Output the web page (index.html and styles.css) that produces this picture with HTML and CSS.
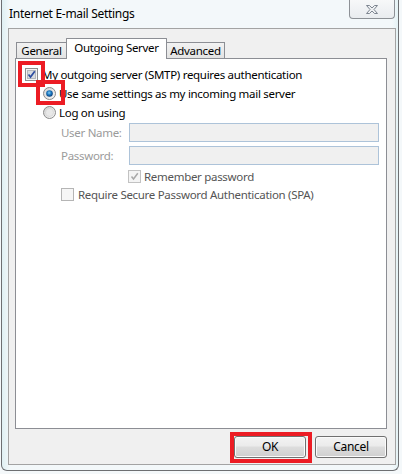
FILE: index.html
```html
<!DOCTYPE html>
<html>
<head>
<meta charset="utf-8">
<link rel="stylesheet" href="styles.css">
</head>
<body>
<div class="window">
  <div class="titlebar">
    <span class="title">Internet E-mail Settings</span>
    <div class="close">
      <svg width="14" height="11" viewBox="0 0 14 11">
        <path d="M1.5 1.5 H4.5 L7 4 L9.5 1.5 H12.5 L9 5.5 L12.5 9.5 H9.5 L7 7 L4.5 9.5 H1.5 L5 5.5 Z" fill="#eef0f2" stroke="#7d8590" stroke-width="1" stroke-linejoin="round"/>
      </svg>
    </div>
  </div>
  <div class="client">
    <div class="tabs">
      <div class="tab first">General</div>
      <div class="tab active">Outgoing Server</div>
      <div class="tab last">Advanced</div>
    </div>
    <div class="panel">
      <div class="row r1">
        <svg class="box" width="13" height="13" viewBox="0 0 13 13">
          <rect x="0.5" y="0.5" width="12" height="12" fill="#f4f4f4" stroke="#8e8f8f"/>
          <rect x="2.5" y="2.5" width="8" height="8" fill="#d9dcdf" stroke="#b4b8bc"/>
          <path d="M3.5 6.5 L5.5 9 L9.8 3.2" fill="none" stroke="#2d4da0" stroke-width="1.7"/>
        </svg>
        <span class="label">My outgoing server (SMTP) requires authentication</span>
      </div>
      <div class="row r2">
        <svg class="radio" width="13" height="13" viewBox="0 0 13 13">
          <defs>
            <radialGradient id="dot" cx="0.45" cy="0.4" r="0.6">
              <stop offset="0" stop-color="#8ad0f5"/>
              <stop offset="0.5" stop-color="#1b79c2"/>
              <stop offset="1" stop-color="#0b3e78"/>
            </radialGradient>
            <linearGradient id="rb" x1="0" y1="0" x2="1" y2="1">
              <stop offset="0" stop-color="#d4d4d4"/>
              <stop offset="1" stop-color="#f7f7f7"/>
            </linearGradient>
          </defs>
          <circle cx="6.5" cy="6.5" r="6" fill="url(#rb)" stroke="#8b8b8b"/>
          <circle cx="6.5" cy="6.5" r="3.3" fill="url(#dot)"/>
        </svg>
        <span class="label">Use same settings as my incoming mail server</span>
      </div>
      <div class="row r3">
        <svg class="radio" width="13" height="13" viewBox="0 0 13 13">
          <defs>
            <linearGradient id="rb2" x1="0" y1="0" x2="1" y2="1">
              <stop offset="0" stop-color="#cfcfcf"/>
              <stop offset="1" stop-color="#f9f9f9"/>
            </linearGradient>
          </defs>
          <circle cx="6.5" cy="6.5" r="6" fill="url(#rb2)" stroke="#8b8b8b"/>
          <circle cx="6.5" cy="6.5" r="4" fill="#e8e8e8" stroke="#d0d0d0" stroke-width="0.6"/>
        </svg>
        <span class="label">Log on using</span>
      </div>
      <div class="row field f1">
        <span class="flabel">User Name:</span>
        <div class="input"></div>
      </div>
      <div class="row field f2">
        <span class="flabel">Password:</span>
        <div class="input"></div>
      </div>
      <div class="row r6">
        <svg class="box" width="13" height="13" viewBox="0 0 13 13">
          <rect x="0.5" y="0.5" width="12" height="12" fill="#f4f4f4" stroke="#c2c2c2"/>
          <path d="M3.5 6.5 L5.5 9 L9.8 3.2" fill="none" stroke="#a8a8a8" stroke-width="1.5"/>
        </svg>
        <span class="label dim">Remember password</span>
      </div>
      <div class="row r7">
        <svg class="box" width="13" height="13" viewBox="0 0 13 13">
          <rect x="0.5" y="0.5" width="12" height="12" fill="#f6f6f6" stroke="#b5b5b5"/>
        </svg>
        <span class="label dim">Require Secure Password Authentication (SPA)</span>
      </div>
    </div>
    <div class="buttons">
      <div class="btn">OK</div>
      <div class="btn">Cancel</div>
    </div>
  </div>
  <div class="hl h1"></div>
  <div class="hl h2"></div>
  <div class="hl h3"></div>
</div>
</body>
</html>
```

FILE: styles.css
```css
html, body {
  margin: 0;
  padding: 0;
  background: #f4f8fa;
}
body {
  width: 402px;
  height: 474px;
  overflow: hidden;
  font-family: "Noto Sans", "Open Sans", sans-serif;
  font-size: 11.5px;
  letter-spacing: -0.3px;
  color: #000;
}
.window {
  position: relative;
  margin-left: 1px;
  width: 398px;
  height: 471px;
  border: 1px solid #6d6f72;
  border-top: none;
  border-radius: 0 0 6px 6px;
  background: linear-gradient(90deg, #dff0f3 0px, #f3f8fa 8px, #f3f8fa 390px, #dff0f3 398px);
  box-sizing: border-box;
}
.titlebar {
  height: 28px;
  display: flex;
  align-items: flex-start;
  justify-content: space-between;
}
.title {
  margin: 5px 0 0 7px;
  font-size: 12px;
  line-height: 18px;
}
.close {
  width: 44px;
  height: 18px;
  margin-right: 3px;
  border: 1px solid #8d9196;
  border-top: none;
  border-radius: 0 0 4px 4px;
  background: linear-gradient(#f7f8f9, #e9ecef);
  display: flex;
  align-items: center;
  justify-content: center;
}
.client {
  margin: 0 2px 0 6px;
  height: 437px;
  border: 1px solid #a3a3a3;
  background: #f0f0f0;
  box-sizing: border-box;
  padding: 8px 8px 0 6px;
  display: flex;
  flex-direction: column;
}
.tabs {
  display: flex;
  align-items: flex-end;
  height: 21px;
  padding-left: 1px;
  position: relative;
  z-index: 2;
}
.tab {
  box-sizing: border-box;
  height: 16px;
  border: 1px solid #8c8e94;
  border-bottom: none;
  background: linear-gradient(#f2f2f2, #e3e3e3);
  line-height: 15px;
  text-align: center;
  white-space: nowrap;
}
.tab.first { width: 50px; border-right: none; }
.tab.last { width: 58px; border-left: none; }
.tab.active {
  height: 21px;
  width: 101px;
  background: #fff;
  margin-bottom: -1px;
  line-height: 17px;
  border-radius: 1px 1px 0 0;
}
.panel {
  height: 371px;
  border: 1px solid #8c8e94;
  background: #fff;
  box-sizing: border-box;
  padding: 6px 0 0 9px;
  display: flex;
  flex-direction: column;
}
.row {
  display: flex;
  align-items: center;
  height: 19px;
  white-space: nowrap;
}
.box, .radio { flex: none; }
.label { margin-left: 4px; white-space: nowrap; }
.r2, .r3 { margin-left: 18px; }
.r3 .label, .r2 .label { margin-left: 3px; }
.field {
  margin-left: 36px;
  height: 19px;
}
.f1 { margin-top: 1px; }
.f2 { margin-top: 4px; }
.flabel {
  width: 68px;
  color: #9b9b9b;
}
.input {
  width: 248px;
  height: 17px;
  border: 1px solid #adc3d9;
  background: #f0f0f0;
}
.dim { color: #555; }
.r6 { margin-left: 103px; margin-top: 2px; }
.r6 .label { margin-left: 3px; }
.r7 { margin-left: 36px; margin-top: -1px; }
.r7 .label { margin-left: 4px; }
.buttons {
  display: flex;
  justify-content: flex-end;
  gap: 9px;
  margin-top: 7px;
}
.btn {
  width: 72px;
  height: 22px;
  box-sizing: border-box;
  border: 1px solid #707070;
  border-radius: 3px;
  background: linear-gradient(#f3f3f3 0%, #ebebeb 45%, #dddddd 50%, #cfcfcf 100%);
  box-shadow: inset 0 0 0 1px #fbfbfb;
  text-align: center;
  line-height: 20px;
  font-size: 12px;
}
.hl {
  position: absolute;
  border: 4px solid #ec1c24;
  box-sizing: border-box;
}
.h1 { left: 16px; top: 61px; width: 27px; height: 26px; }
.h2 { left: 34px; top: 80px; width: 29px; height: 25px; }
.h3 { left: 228px; top: 432px; width: 82px; height: 31px; }
```
